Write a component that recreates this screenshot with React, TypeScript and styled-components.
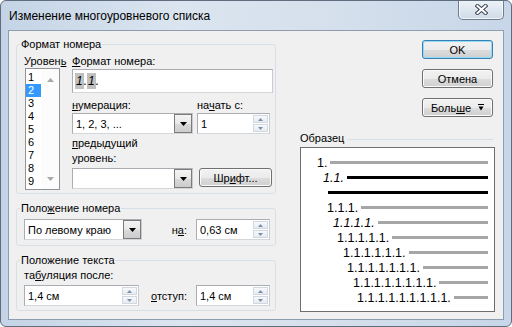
import React from "react";
import styled, { createGlobalStyle } from "styled-components";

const GlobalStyle = createGlobalStyle`
  html, body {
    margin: 0;
    padding: 0;
    background: #ffffff;
  }
  body {
    font-family: "Liberation Sans", Arial, sans-serif;
  }
`;

const Window = styled.div`
  width: 512px;
  height: 327px;
  box-sizing: border-box;
  border: 1px solid #5f6d7e;
  border-radius: 6px;
  background: linear-gradient(90deg, #c4d4e6 0%, #dbe5f0 35%, #d5e0ec 65%, #c7d6e8 100%);
  display: flex;
  flex-direction: column;
  overflow: hidden;
`;

const TitleBar = styled.div`
  height: 29px;
  display: flex;
  align-items: flex-start;
`;

const Title = styled.div`
  padding: 8px 0 0 8px;
  font-size: 12px;
  line-height: 15px;
  color: #000;
`;

const CloseButton = styled.div`
  margin: -1px 7px 0 auto;
  width: 46px;
  height: 20px;
  box-sizing: border-box;
  border: 1px solid #6f7d8f;
  border-top: none;
  border-radius: 0 0 5px 5px;
  background: linear-gradient(#eef3f8 0%, #dfe7f0 50%, #cfdbe8 100%);
  box-shadow: inset 0 0 0 1px rgba(255, 255, 255, 0.7);
  display: flex;
  align-items: center;
  justify-content: center;
`;

const Client = styled.div`
  margin: 0 7px;
  height: 290px;
  box-sizing: border-box;
  border: 1px solid #8e9db0;
  background: #f0f0f0;
  display: flex;
  padding: 7px 8px 0 7px;
  font-size: 11px;
  color: #000;
`;

const LeftCol = styled.div`
  width: 260px;
  display: flex;
  flex-direction: column;
  gap: 8px;
`;

const RightCol = styled.div`
  width: 195px;
  margin-left: 24px;
  display: flex;
  flex-direction: column;
`;

const Group = styled.fieldset<{ $h: number }>`
  margin: 0;
  padding: 0;
  min-width: 0;
  height: ${(p) => p.$h}px;
  box-sizing: border-box;
  border: 1px solid #d5dfe5;
  border-radius: 3px;
`;

const Legend = styled.legend`
  margin-left: 3px;
  padding: 0 1px;
  line-height: 13px;
  font-size: 11px;
`;

const U = styled.span`
  text-decoration: underline;
`;

const Label = styled.div<{ $lh?: number }>`
  line-height: ${(p) => p.$lh ?? 13}px;
  white-space: nowrap;
`;

const FormatBody = styled.div`
  display: flex;
  padding: 4px 0 0 7px;
`;

const LevelCol = styled.div`
  width: 48px;
  display: flex;
  flex-direction: column;
`;

const ListBox = styled.div`
  margin-left: 1px;
  width: 35px;
  height: 122px;
  box-sizing: border-box;
  border: 1px solid #8f949b;
  background: #fff;
  display: flex;
`;

const Items = styled.div`
  width: 15px;
  padding-top: 2px;
`;

const Item = styled.div<{ $sel?: boolean }>`
  height: 13px;
  line-height: 13px;
  padding-left: 2px;
  background: ${(p) => (p.$sel ? "#3399ff" : "transparent")};
  color: ${(p) => (p.$sel ? "#fff" : "#000")};
`;

const ScrollCol = styled.div`
  flex: 1;
  display: flex;
  flex-direction: column;
  justify-content: space-between;
  align-items: center;
  padding: 9px 0 8px;
  background: #fcfcfc;
`;

const FormCol = styled.div`
  width: 201px;
  display: flex;
  flex-direction: column;
`;

const TextBox = styled.div<{ $w?: number; $h?: number }>`
  width: ${(p) => (p.$w ? `${p.$w}px` : "auto")};
  height: ${(p) => p.$h ?? 21}px;
  box-sizing: border-box;
  border: 1px solid #abadb3;
  border-right-color: #c8ccd2;
  border-bottom-color: #d3d7dc;
  background: #fff;
  display: flex;
  align-items: center;
`;

const FieldText = styled.div`
  flex: 1;
  padding-left: 3px;
  white-space: nowrap;
  font-size: 11px;
`;

const FormatText = styled.div`
  padding-left: 2px;
  font-size: 12px;
  font-style: italic;
  display: flex;
  align-items: center;
`;

const Placeholder = styled.span`
  background: #c0c0c0;
  padding: 0 1px;
  line-height: 16px;
`;

const DropButton = styled.div`
  width: 18px;
  align-self: stretch;
  box-sizing: border-box;
  border: 1px solid #7b7b7b;
  background: linear-gradient(#f4f4f4 0%, #e8e8e8 50%, #d9d9d9 51%, #cdcdcd 100%);
  display: flex;
  align-items: center;
  justify-content: center;
`;

const SpinCol = styled.div`
  width: 15px;
  align-self: stretch;
  display: flex;
  flex-direction: column;
  padding: 1px 1px 1px 0;
  gap: 1px;
`;

const SpinButton = styled.div`
  flex: 1;
  box-sizing: border-box;
  border: 1px solid #d2d8e0;
  background: linear-gradient(#f7f9fb, #e6ebf1);
  display: flex;
  align-items: center;
  justify-content: center;
`;

const Row = styled.div<{ $mt?: number; $end?: boolean }>`
  display: flex;
  margin-top: ${(p) => p.$mt ?? 0}px;
  align-items: ${(p) => (p.$end ? "flex-end" : "flex-start")};
`;

const Col = styled.div<{ $w: number; $ml?: number }>`
  width: ${(p) => p.$w}px;
  margin-left: ${(p) => p.$ml ?? 0}px;
  display: flex;
  flex-direction: column;
`;

const Stack = styled.div<{ $mt: number }>`
  margin-top: ${(p) => p.$mt}px;
`;

const Button = styled.div<{ $w?: number; $def?: boolean }>`
  width: ${(p) => p.$w ?? 71}px;
  height: 19px;
  box-sizing: border-box;
  border: 1px solid ${(p) => (p.$def ? "#3c7fb1" : "#707070")};
  border-radius: 3px;
  background: linear-gradient(#f2f2f2 0%, #ebebeb 50%, #dddddd 51%, #cfcfcf 100%);
  box-shadow: inset 0 0 0 1px ${(p) => (p.$def ? "#8fdcf8" : "#fbfbfb")};
  display: flex;
  align-items: center;
  justify-content: center;
  gap: 7px;
  font-size: 11px;
  white-space: nowrap;
`;

const FontButton = styled(Button)`
  margin: 0 0 2px 6px;
`;

const InlineRow = styled.div<{ $pt: number }>`
  display: flex;
  align-items: center;
  padding: ${(p) => p.$pt}px 5px 0 7px;
`;

const SideLabel = styled.div`
  margin-left: auto;
  margin-right: 9px;
  white-space: nowrap;
`;

const GroupBody = styled.div`
  padding: 2px 0 0 7px;
`;

const ButtonStack = styled.div`
  display: flex;
  flex-direction: column;
  align-items: flex-end;
  gap: 10px;
  padding: 2px 2px 0 0;
`;

const SampleHeader = styled.div`
  margin-top: 15px;
  display: flex;
  align-items: center;
  line-height: 13px;
`;

const SampleRule = styled.div`
  flex: 1;
  height: 1px;
  margin: 1px 2px 0 4px;
  background: #d5dfe5;
`;

const Preview = styled.div`
  margin-top: 2px;
  height: 165px;
  box-sizing: border-box;
  border: 1px solid #6e6e6e;
  background: #fff;
  padding: 7px 6px 0 0;
  font-size: 12.5px;
`;

const SampleRow = styled.div<{ $indent: number }>`
  height: 15px;
  display: flex;
  align-items: center;
  padding-left: ${(p) => p.$indent}px;
`;

const SampleNum = styled.span<{ $italic?: boolean }>`
  font-style: ${(p) => (p.$italic ? "italic" : "normal")};
  white-space: nowrap;
  margin-right: 3px;
`;

const SampleLine = styled.div<{ $dark?: boolean }>`
  flex: 1;
  height: 3px;
  background: ${(p) => (p.$dark ? "#000" : "#a6a6a6")};
`;

const ArrowDown = ({ color = "#000", w = 7, h = 4 }: { color?: string; w?: number; h?: number }) => (
  <svg width={w} height={h} viewBox={`0 0 ${w} ${h}`}>
    <path d={`M0 0H${w}L${w / 2} ${h}Z`} fill={color} />
  </svg>
);

const ArrowUp = ({ color = "#000", w = 7, h = 4 }: { color?: string; w?: number; h?: number }) => (
  <svg width={w} height={h} viewBox={`0 0 ${w} ${h}`}>
    <path d={`M0 ${h}H${w}L${w / 2} 0Z`} fill={color} />
  </svg>
);

const Combo = ({ w, text }: { w: number; text: string }) => (
  <TextBox $w={w}>
    <FieldText>{text}</FieldText>
    <DropButton>
      <ArrowDown />
    </DropButton>
  </TextBox>
);

const Spin = ({ w, text }: { w: number; text: string }) => (
  <TextBox $w={w}>
    <FieldText>{text}</FieldText>
    <SpinCol>
      <SpinButton>
        <ArrowUp color="#7d8fa6" w={5} h={3} />
      </SpinButton>
      <SpinButton>
        <ArrowDown color="#7d8fa6" w={5} h={3} />
      </SpinButton>
    </SpinCol>
  </TextBox>
);

const samples = [
  { text: "1.", indent: 16 },
  { text: "1.1.", indent: 22, italic: true, dark: true },
  { text: "", indent: 27, dark: true },
  { text: "1.1.1.", indent: 26 },
  { text: "1.1.1.1.", indent: 32, italic: true },
  { text: "1.1.1.1.1.", indent: 36 },
  { text: "1.1.1.1.1.1.", indent: 42 },
  { text: "1.1.1.1.1.1.1.", indent: 46 },
  { text: "1.1.1.1.1.1.1.1.", indent: 52 },
  { text: "1.1.1.1.1.1.1.1.1.", indent: 56 },
];

export default function App() {
  return (
    <>
      <GlobalStyle />
      <Window>
        <TitleBar>
          <Title>Изменение многоуровневого списка</Title>
          <CloseButton>
            <svg width="13" height="11" viewBox="0 0 13 11">
              <path d="M2.5 2L10.5 9M10.5 2L2.5 9" stroke="#3c4554" strokeWidth="4" strokeLinecap="square" />
              <path d="M2.5 2L10.5 9M10.5 2L2.5 9" stroke="#ffffff" strokeWidth="2" strokeLinecap="square" />
            </svg>
          </CloseButton>
        </TitleBar>
        <Client>
          <LeftCol>
            <Group $h={156}>
              <Legend>Формат номера</Legend>
              <FormatBody>
                <LevelCol>
                  <Label>
                    Уровен<U>ь</U>
                  </Label>
                  <ListBox>
                    <Items>
                      {[1, 2, 3, 4, 5, 6, 7, 8, 9].map((n) => (
                        <Item key={n} $sel={n === 2}>
                          {n}
                        </Item>
                      ))}
                    </Items>
                    <ScrollCol>
                      <ArrowUp color="#a8a8a8" />
                      <ArrowDown color="#a8a8a8" />
                    </ScrollCol>
                  </ListBox>
                </LevelCol>
                <FormCol>
                  <Label>
                    <U>Ф</U>ормат номера:
                  </Label>
                  <Stack $mt={1}>
                    <TextBox $h={24}>
                      <FormatText>
                        <Placeholder>1</Placeholder>.<Placeholder>1</Placeholder>.
                      </FormatText>
                    </TextBox>
                  </Stack>
                  <Row $mt={6}>
                    <Col $w={121}>
                      <Label>
                        <U>н</U>умерация:
                      </Label>
                      <Stack $mt={1}>
                        <Combo w={121} text="1, 2, 3, ..." />
                      </Stack>
                    </Col>
                    <Col $w={73} $ml={4}>
                      <Label>
                        на<U>ч</U>ать с:
                      </Label>
                      <Stack $mt={1}>
                        <Spin w={73} text="1" />
                      </Stack>
                    </Col>
                  </Row>
                  <Row $mt={2} $end>
                    <Col $w={121}>
                      <Label $lh={15}>
                        <U>п</U>редыдущий
                        <br />
                        уровень:
                      </Label>
                      <Stack $mt={2}>
                        <Combo w={121} text="" />
                      </Stack>
                    </Col>
                    <FontButton $w={73}>
                      <span>
                        Шр<U>и</U>фт...
                      </span>
                    </FontButton>
                  </Row>
                </FormCol>
              </FormatBody>
            </Group>

            <Group $h={44}>
              <Legend>
                Поло<U>ж</U>ение номера
              </Legend>
              <InlineRow $pt={4}>
                <Combo w={118} text="По левому краю" />
                <SideLabel>
                  н<U>а</U>:
                </SideLabel>
                <Spin w={74} text="0,63 см" />
              </InlineRow>
            </Group>

            <Group $h={57}>
              <Legend>Положение текста</Legend>
              <GroupBody>
                <Label>
                  та<U>б</U>уляция после:
                </Label>
              </GroupBody>
              <InlineRow $pt={3}>
                <Spin w={115} text="1,4 см" />
                <SideLabel>
                  <U>о</U>тступ:
                </SideLabel>
                <Spin w={74} text="1,4 см" />
              </InlineRow>
            </Group>
          </LeftCol>

          <RightCol>
            <ButtonStack>
              <Button $def>OK</Button>
              <Button>Отмена</Button>
              <Button>
                <span>
                  Боль<U>ш</U>е
                </span>
                <svg width="6" height="7" viewBox="0 0 6 7">
                  <path d="M0 0.5H6" stroke="#000" strokeWidth="1" />
                  <path d="M0.5 2.5H5.5L3 6.5Z" fill="#000" />
                </svg>
              </Button>
            </ButtonStack>
            <SampleHeader>
              <span>Образец</span>
              <SampleRule />
            </SampleHeader>
            <Preview>
              {samples.map((s, i) => (
                <SampleRow key={i} $indent={s.indent}>
                  {s.text && <SampleNum $italic={s.italic}>{s.text}</SampleNum>}
                  <SampleLine $dark={s.dark} />
                </SampleRow>
              ))}
            </Preview>
          </RightCol>
        </Client>
      </Window>
    </>
  );
}
